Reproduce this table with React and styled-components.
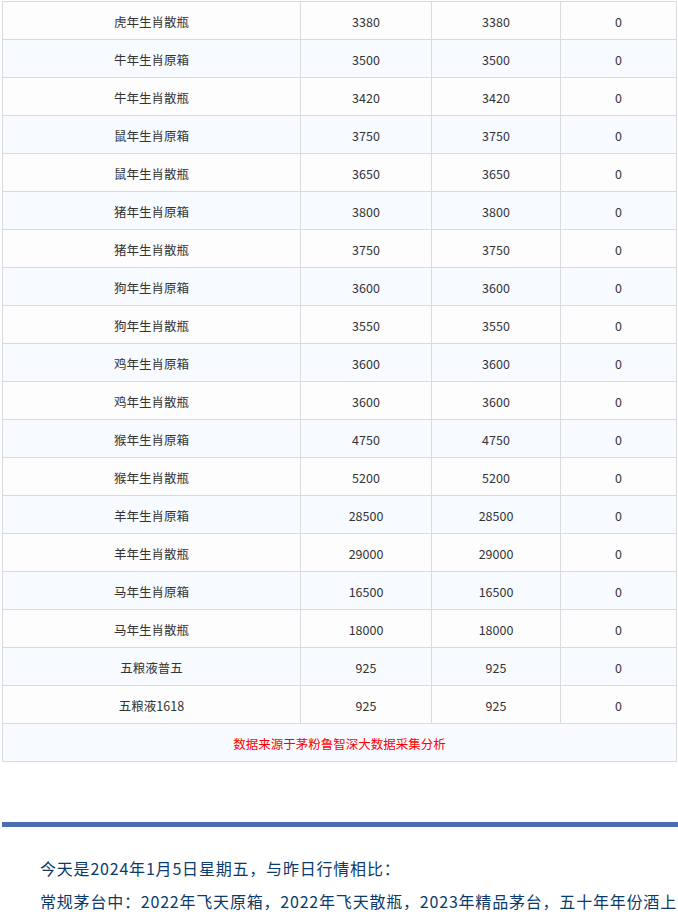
import React from 'react';
import styled, { createGlobalStyle } from 'styled-components';

const GlobalStyle = createGlobalStyle`
	html, body {
		margin: 0;
		padding: 0;
		background: #ffffff;
	}
	body {
		font-family: "Noto Sans CJK SC", "Noto Sans", sans-serif;
	}
`;

const Page = styled.div`
	width: 678px;
	padding: 1px 0 0 2px;
	box-sizing: border-box;
	overflow: hidden;
`;

const PriceTable = styled.table`
	width: 675px;
	border-collapse: collapse;
	table-layout: fixed;
	font-size: 12.5px;
	color: #333333;
`;

const Row = styled.tr`
	background: ${props => props.$alt ? '#f7faff' : '#fdfdfe'};
`;

const Cell = styled.td`
	height: 33px;
	padding: 4px 0 0;
	border: 1px solid #dadbe0;
	text-align: center;
	vertical-align: middle;
	line-height: 1;
`;

const SourceCell = styled(Cell)`
	color: #ff0000;
`;

const Divider = styled.div`
	height: 5px;
	margin-top: 60px;
	background: #4a6daf;
`;

const Article = styled.div`
	padding: 25px 0 0 38px;
	color: #0b3b6c;
	font-size: 16px;
	line-height: 33px;
	letter-spacing: 0.8px;
`;

const Para = styled.p`
	margin: 0;
`;

const rows = [
	['虎年生肖散瓶', 3380, 3380, 0],
	['牛年生肖原箱', 3500, 3500, 0],
	['牛年生肖散瓶', 3420, 3420, 0],
	['鼠年生肖原箱', 3750, 3750, 0],
	['鼠年生肖散瓶', 3650, 3650, 0],
	['猪年生肖原箱', 3800, 3800, 0],
	['猪年生肖散瓶', 3750, 3750, 0],
	['狗年生肖原箱', 3600, 3600, 0],
	['狗年生肖散瓶', 3550, 3550, 0],
	['鸡年生肖原箱', 3600, 3600, 0],
	['鸡年生肖散瓶', 3600, 3600, 0],
	['猴年生肖原箱', 4750, 4750, 0],
	['猴年生肖散瓶', 5200, 5200, 0],
	['羊年生肖原箱', 28500, 28500, 0],
	['羊年生肖散瓶', 29000, 29000, 0],
	['马年生肖原箱', 16500, 16500, 0],
	['马年生肖散瓶', 18000, 18000, 0],
	['五粮液普五', 925, 925, 0],
	['五粮液1618', 925, 925, 0],
];

function App() {
	return (
		<>
			<GlobalStyle />
			<Page>
				<PriceTable>
					<colgroup>
						<col style={{width: 298}} />
						<col style={{width: 131}} />
						<col style={{width: 129}} />
						<col />
					</colgroup>
					<tbody>
						{rows.map((r, i) => (
							<Row key={i} $alt={i % 2 === 1}>
								<Cell>{r[0]}</Cell>
								<Cell>{r[1]}</Cell>
								<Cell>{r[2]}</Cell>
								<Cell>{r[3]}</Cell>
							</Row>
						))}
						<Row $alt>
							<SourceCell colSpan={4}>数据来源于茅粉鲁智深大数据采集分析</SourceCell>
						</Row>
					</tbody>
				</PriceTable>

				<Divider />

				<Article>
					<Para>今天是2024年1月5日星期五，与昨日行情相比：</Para>
					<Para>常规茅台中：2022年飞天原箱，2022年飞天散瓶，2023年精品茅台，五十年年份酒上涨，其余产品价格保持稳定。</Para>
				</Article>
			</Page>
		</>
	);
}

export default App;
